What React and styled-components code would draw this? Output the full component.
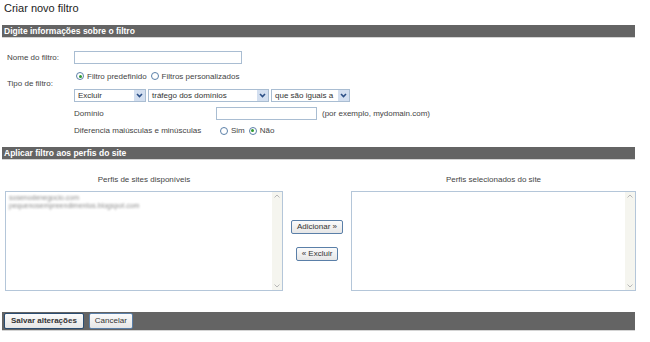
import React from 'react';
import styled, { createGlobalStyle } from 'styled-components';

const GlobalStyle = createGlobalStyle`
  * { box-sizing: border-box; }
  body {
    margin: 0;
    background: #fff;
    font-family: "Liberation Sans", Arial, sans-serif;
    color: #333;
  }
`;

const Page = styled.div`
  width: 650px;
  padding: 0 15px 0 2px;
`;

const Title = styled.h1`
  margin: 2px 0 0 2px;
  font-size: 11px;
  line-height: 13px;
  font-weight: normal;
  color: #222;
`;

const Bar = styled.div`
  margin-top: ${({ $top }) => $top}px;
  height: ${({ $height }) => $height || 13}px;
  background: #646464;
  border-bottom: 1px solid #d4d4d4;
  color: #fff;
  font-size: 8.5px;
  font-weight: bold;
  line-height: 13px;
  padding-left: 2px;
  display: flex;
  align-items: center;
  gap: 5px;
`;

const Form = styled.div`
  padding: 13px 0 0 5px;
`;

const Row = styled.div`
  display: flex;
  align-items: center;
  margin-top: ${({ $top }) => $top || 0}px;
`;

const Label = styled.span`
  width: ${({ $w }) => $w || 67}px;
  flex-shrink: 0;
  font-size: 8px;
  color: #444;
`;

const Text = styled.span`
  font-size: 8px;
  color: #444;
  margin-left: ${({ $left }) => $left || 0}px;
`;

const Input = styled.div`
  width: ${({ $w }) => $w}px;
  height: 13px;
  border: 1px solid #a9bdd2;
  background: #fff;
`;

const Controls = styled.div`
  display: flex;
  flex-direction: column;
`;

const RadioLine = styled.div`
  display: flex;
  align-items: center;
  height: 12px;
  margin-top: 6px;
`;

const Radio = styled.span`
  width: 8px;
  height: 8px;
  border-radius: 50%;
  border: 1px solid #5b80a8;
  background: #fff;
  display: inline-flex;
  align-items: center;
  justify-content: center;
  margin: 0 3px 0 ${({ $left }) => $left || 0}px;
  &::after {
    content: '';
    width: 3px;
    height: 3px;
    border-radius: 50%;
    background: ${({ $on }) => ($on ? '#2f9a2f' : 'transparent')};
  }
`;

const SelectLine = styled.div`
  display: flex;
  gap: 2px;
  margin-top: 7px;
`;

const Select = styled.div`
  width: ${({ $w }) => $w}px;
  height: 13px;
  border: 1px solid #a9bdd2;
  background: #fff;
  display: flex;
  align-items: center;
  justify-content: space-between;
  font-size: 8px;
  color: #333;
  padding-left: 3px;
`;

const Arrow = styled.span`
  width: 11px;
  height: 11px;
  background: #d3dff0;
  display: flex;
  align-items: center;
  justify-content: center;
`;

const SubRows = styled.div`
  padding-left: 67px;
`;

const Lists = styled.div`
  display: grid;
  grid-template-columns: 278px 68px 285px;
  margin: 15px 0 0 3px;
`;

const ListCol = styled.div`
  display: flex;
  flex-direction: column;
  align-items: center;
  gap: 7px;
`;

const ListTitle = styled.span`
  font-size: 8px;
  color: #444;
`;

const ListBox = styled.div`
  width: 100%;
  height: 100px;
  border: 1px solid #b4c6d9;
  background: #fff;
  display: flex;
`;

const ListItems = styled.div`
  flex: 1;
  padding: 2px 3px;
  font-size: 7px;
  line-height: 8px;
  color: #8c8c8c;
  filter: blur(0.9px);
`;

const ScrollBar = styled.div`
  width: 10px;
  background: #f5f5ef;
  display: flex;
  flex-direction: column;
  justify-content: space-between;
  align-items: center;
  padding: 2px 0;
`;

const Middle = styled.div`
  display: flex;
  flex-direction: column;
  align-items: center;
  gap: 13px;
  padding-top: 45px;
`;

const Button = styled.button`
  height: ${({ $h }) => $h || 14}px;
  padding: 0 ${({ $pad }) => $pad || 5}px;
  border: 1px solid ${({ $strong }) => ($strong ? '#2b4d72' : '#5a7fa8')};
  border-radius: 2px;
  background: linear-gradient(#fbfbfb, #e6e6e6);
  font-family: "Liberation Sans", Arial, sans-serif;
  font-size: 8px;
  font-weight: ${({ $bold }) => ($bold ? 'bold' : 'normal')};
  color: #333;
  line-height: 1;
  cursor: pointer;
`;

const ScrollArrow = ({ up }) => (
  <svg width="6" height="4" viewBox="0 0 6 4">
    <path d={up ? 'M0.5 3.5 L3 1 L5.5 3.5' : 'M0.5 0.5 L3 3 L5.5 0.5'} fill="none" stroke="#b8b8b8" strokeWidth="1" />
  </svg>
);

const Chevron = () => (
  <svg width="7" height="5" viewBox="0 0 7 5">
    <path d="M1 1 L3.5 3.5 L6 1" fill="none" stroke="#2c4f86" strokeWidth="1.6" />
  </svg>
);

const Dropdown = ({ w, children }) => (
  <Select $w={w}>
    <span>{children}</span>
    <Arrow><Chevron /></Arrow>
  </Select>
);

const App = () => (
  <>
    <GlobalStyle />
    <Page>
      <Title>Criar novo filtro</Title>
      <Bar $top={10}>Digite informações sobre o filtro</Bar>
      <Form>
        <Row>
          <Label>Nome do filtro:</Label>
          <Input $w={168} />
        </Row>
        <Row>
          <Label>Tipo de filtro:</Label>
          <Controls>
            <RadioLine>
              <Radio $on $left={2} />
              <Text>Filtro predefinido</Text>
              <Radio $left={4} />
              <Text>Filtros personalizados</Text>
            </RadioLine>
            <SelectLine>
              <Dropdown w={72}>Excluir</Dropdown>
              <Dropdown w={121}>tráfego dos domínios</Dropdown>
              <Dropdown w={79}>que são iguais a</Dropdown>
            </SelectLine>
          </Controls>
        </Row>
        <SubRows>
          <Row $top={5}>
            <Label $w={142}>Domínio</Label>
            <Input $w={101} />
            <Text $left={5}>(por exemplo, mydomain.com)</Text>
          </Row>
          <Row $top={6}>
            <Label $w={146}>Diferencia maiúsculas e minúsculas</Label>
            <Radio />
            <Text>Sim</Text>
            <Radio $on $left={4} />
            <Text>Não</Text>
          </Row>
        </SubRows>
      </Form>
      <Bar $top={12}>Aplicar filtro aos perfis do site</Bar>
      <Lists>
        <ListCol>
          <ListTitle>Perfis de sites disponíveis</ListTitle>
          <ListBox>
            <ListItems>
              <div>sosenodenegocio.com</div>
              <div>pequenosempreendimentos.blogspot.com</div>
            </ListItems>
            <ScrollBar>
              <ScrollArrow up />
              <ScrollArrow />
            </ScrollBar>
          </ListBox>
        </ListCol>
        <Middle>
          <Button>Adicionar »</Button>
          <Button>« Excluir</Button>
        </Middle>
        <ListCol>
          <ListTitle>Perfis selecionados do site</ListTitle>
          <ListBox>
            <ListItems />
            <ScrollBar>
              <ScrollArrow up />
              <ScrollArrow />
            </ScrollBar>
          </ListBox>
        </ListCol>
      </Lists>
      <Bar $top={21} $height={19}>
        <Button $h={16} $pad={6} $bold $strong>Salvar alterações</Button>
        <Button $h={16} $pad={5}>Cancelar</Button>
      </Bar>
    </Page>
  </>
);

export default App;
